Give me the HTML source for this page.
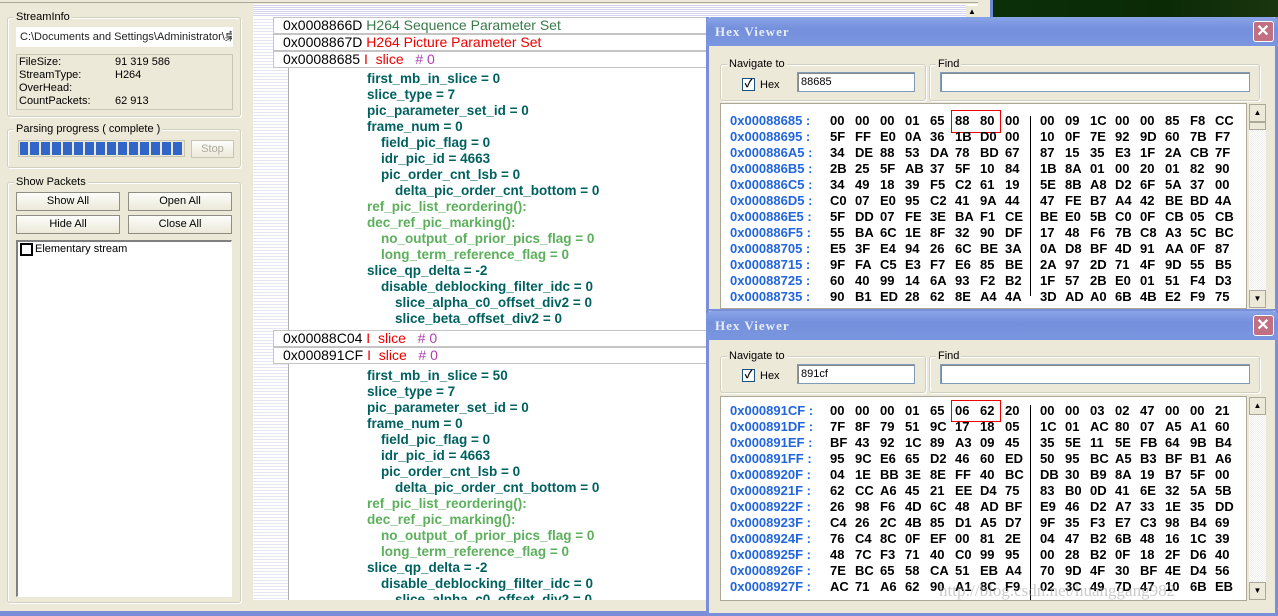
<!DOCTYPE html>
<html><head><meta charset="utf-8">
<style>
*{margin:0;padding:0;box-sizing:border-box}
body{width:1278px;height:616px;overflow:hidden;background:#ECE9D8;position:relative;font-family:"Liberation Sans","Noto Sans CJK SC",sans-serif}
.a{position:absolute}
.grp{position:absolute;border:1px solid #D0D0BF;box-shadow:inset 1px 1px 0 #fff,1px 1px 0 #fff;border-radius:3px}
.gl{position:absolute;top:-8px;left:6px;background:#ECE9D8;padding:0 2px;font-size:11px;color:#000;line-height:14px}
.btn{position:absolute;height:19px;border:1px solid #8f8e84;background:linear-gradient(#fdfdfb,#ECE9D8);font-size:11px;text-align:center;line-height:17px;color:#000}
.sm{font-size:11px;line-height:13px;color:#000}
.tr{position:absolute;font-weight:bold;font-size:13.5px;color:#006060;line-height:16px;white-space:nowrap}
.g{color:#5cb05c}
.hd{position:absolute;left:273px;width:460px;height:17px;border:1px solid #c4c4c4;background:#fff;font-size:14px;line-height:15px;white-space:nowrap;padding-left:9px}
.hd b{font-weight:normal;color:#000}
.dlg{position:absolute;left:706px;width:572px;background:#ECE9D8;border:3px solid #7b8fd8;border-top:none}
.tt{position:absolute;left:-3px;right:-3px;top:0;height:29px;background:linear-gradient(#8aa4e8,#7490dc 40%,#7a96e0);border-radius:6px 6px 0 0;color:#e6ecf8;font-family:"Liberation Serif",serif;font-weight:bold;font-size:13px;letter-spacing:1px;line-height:29px;padding-left:9px}
.cl{position:absolute;right:4px;top:4px;width:21px;height:21px;background:#c07080;border:1px solid #fff;border-radius:3px;color:#fff;font-size:16px;line-height:19px;text-align:center;font-family:"Liberation Sans",sans-serif}
.inp{position:absolute;background:#fff;border:1px solid #7f9db9;box-shadow:inset 1px 1px 0 #888;font-size:11px;line-height:18px;padding-left:3px;color:#000}
.hx{position:absolute;background:#fff;border:1px solid #aca899;overflow:hidden}
.row{position:absolute;left:9px;height:16px;font-weight:bold;font-size:13px;line-height:16px;white-space:nowrap}
.row s{text-decoration:none;color:#2266dd;display:inline-block;width:100px}
.row i{font-style:normal;display:inline-block;width:25px;color:#000}
.row u{text-decoration:none;display:inline-block;width:10px}
.sep{position:absolute;left:309px;width:1px;background:#000}
.sb{position:absolute;width:17px;background:repeating-conic-gradient(#eee 0 25%,#fff 0 50%) 0 0/2px 2px}
.sbb{position:absolute;left:0;width:17px;height:18px;border:1px solid #aca899;background:#ECE9D8;font-size:8px;text-align:center;line-height:16px}
.chk{position:absolute;width:13px;height:13px;border:1px solid #1c5180;background:#fff;font-size:11px;line-height:11px;text-align:center;font-weight:bold}
</style></head><body>

<!-- top line -->
<div class="a" style="left:0;top:0;width:990px;height:3px;border-bottom:1px solid #aca899"></div>
<!-- desktop -->
<div class="a" style="left:990px;top:0;width:3px;height:18px;background:#6f86d4"></div>
<div class="a" style="left:993px;top:0;width:285px;height:18px;background:linear-gradient(90deg,#0b3008,#0a2a06 60%,#1a3510)"></div>
<div class="a" style="left:0;top:611px;width:710px;height:5px;background:#7b8fd8"></div>

<!-- LEFT PANEL -->
<div class="grp" style="left:7px;top:17px;width:234px;height:100px"><div class="gl">StreamInfo</div></div>
<div class="inp" style="left:16px;top:27px;width:217px;height:20px;white-space:nowrap;overflow:hidden;border-color:#fff;box-shadow:none;background:#fff;color:#222">C:\Documents and Settings\Administrator\桌</div>
<div class="a" style="left:16px;top:54px;width:217px;height:56px;border:1px solid #c8c5b0;background:#ECE9D8"></div>
<div class="a sm" style="left:19px;top:56px">FileSize:<br>StreamType:<br>OverHead:<br>CountPackets:</div>
<div class="a sm" style="left:115px;top:56px">91 319 586<br>H264<br><br>62 913</div>

<div class="grp" style="left:7px;top:129px;width:234px;height:39px"><div class="gl">Parsing progress ( complete )</div></div>
<div class="a" style="left:18px;top:140px;width:167px;height:17px;border:1px solid #c8c5b0;background:repeating-linear-gradient(90deg,#3166c8 0 9px,#ECE9D8 9px 11px);background-clip:content-box;padding:1px"></div>
<div class="btn" style="left:191px;top:140px;width:43px;height:18px;color:#aca899;border-color:#c8c5b0">Stop</div>

<div class="grp" style="left:7px;top:182px;width:234px;height:421px"><div class="gl">Show Packets</div></div>
<div class="btn" style="left:16px;top:192px;width:104px">Show All</div>
<div class="btn" style="left:128px;top:192px;width:104px">Open All</div>
<div class="btn" style="left:16px;top:215px;width:104px">Hide All</div>
<div class="btn" style="left:128px;top:215px;width:104px">Close All</div>
<div class="a" style="left:16px;top:240px;width:216px;height:357px;background:#fff;border:1px solid #fff;border-left:2px solid #808080;border-top:2px solid #808080"></div>
<div class="a" style="left:20px;top:243px;width:13px;height:13px;border:2px solid #000"></div>
<div class="a sm" style="left:35px;top:243px">Elementary stream</div>

<!-- CENTER LIST -->
<div class="a" style="left:253px;top:4px;width:737px;height:596px;background:#fff"></div>
<div class="a" style="left:253px;top:4px;width:713px;height:13px;background:repeating-linear-gradient(#fff 0 1px,#d4d4f0 1px 2px)"></div>
<div class="a" style="left:253px;top:17px;width:35px;height:583px;background:repeating-linear-gradient(#fff 0 2px,#e6e6f4 2px 3px)"></div>
<div class="a" style="left:288px;top:17px;width:1px;height:583px;background:#b0b0b0"></div>
<div class="a" style="left:966px;top:6px;width:12px;height:12px;background:#ECE9D8;font-size:8px;text-align:center;line-height:12px">▲</div>
<div class="a" style="left:978px;top:0;width:12px;height:18px;background:#ECE9D8"></div>

<div class="hd" style="top:17px"><b>0x0008866D</b> <span style="color:#3a7a4a">H264 Sequence Parameter Set</span></div>
<div class="hd" style="top:34px"><b>0x0008867D</b> <span style="color:#e00">H264 Picture Parameter Set</span></div>
<div class="hd" style="top:51px"><b>0x00088685</b> <span style="color:#e00">I &nbsp;slice</span> &nbsp; <span style="color:#b040b0">#&nbsp;0</span></div>

<div class="tr" style="left:367px;top:71px">first_mb_in_slice = 0</div>
<div class="tr" style="left:367px;top:87px">slice_type = 7</div>
<div class="tr" style="left:367px;top:103px">pic_parameter_set_id = 0</div>
<div class="tr" style="left:367px;top:119px">frame_num = 0</div>
<div class="tr" style="left:381px;top:135px">field_pic_flag = 0</div>
<div class="tr" style="left:381px;top:151px">idr_pic_id = 4663</div>
<div class="tr" style="left:381px;top:167px">pic_order_cnt_lsb = 0</div>
<div class="tr" style="left:395px;top:183px">delta_pic_order_cnt_bottom = 0</div>
<div class="tr g" style="left:367px;top:199px">ref_pic_list_reordering():</div>
<div class="tr g" style="left:367px;top:215px">dec_ref_pic_marking():</div>
<div class="tr g" style="left:381px;top:231px">no_output_of_prior_pics_flag = 0</div>
<div class="tr g" style="left:381px;top:247px">long_term_reference_flag = 0</div>
<div class="tr" style="left:367px;top:263px">slice_qp_delta = -2</div>
<div class="tr" style="left:381px;top:279px">disable_deblocking_filter_idc = 0</div>
<div class="tr" style="left:395px;top:295px">slice_alpha_c0_offset_div2 = 0</div>
<div class="tr" style="left:395px;top:311px">slice_beta_offset_div2 = 0</div>

<div class="hd" style="top:330px"><b>0x00088C04</b> <span style="color:#e00">I &nbsp;slice</span> &nbsp; <span style="color:#b040b0">#&nbsp;0</span></div>
<div class="hd" style="top:347px"><b>0x000891CF</b> <span style="color:#e00">I &nbsp;slice</span> &nbsp; <span style="color:#b040b0">#&nbsp;0</span></div>

<div class="tr" style="left:367px;top:368px">first_mb_in_slice = 50</div>
<div class="tr" style="left:367px;top:384px">slice_type = 7</div>
<div class="tr" style="left:367px;top:400px">pic_parameter_set_id = 0</div>
<div class="tr" style="left:367px;top:416px">frame_num = 0</div>
<div class="tr" style="left:381px;top:432px">field_pic_flag = 0</div>
<div class="tr" style="left:381px;top:448px">idr_pic_id = 4663</div>
<div class="tr" style="left:381px;top:464px">pic_order_cnt_lsb = 0</div>
<div class="tr" style="left:395px;top:480px">delta_pic_order_cnt_bottom = 0</div>
<div class="tr g" style="left:367px;top:496px">ref_pic_list_reordering():</div>
<div class="tr g" style="left:367px;top:512px">dec_ref_pic_marking():</div>
<div class="tr g" style="left:381px;top:528px">no_output_of_prior_pics_flag = 0</div>
<div class="tr g" style="left:381px;top:544px">long_term_reference_flag = 0</div>
<div class="tr" style="left:367px;top:560px">slice_qp_delta = -2</div>
<div class="tr" style="left:381px;top:576px">disable_deblocking_filter_idc = 0</div>
<div class="a" style="left:289px;top:592px;width:420px;height:8px;overflow:hidden"><div class="tr" style="left:106px;top:0">slice_alpha_c0_offset_div2 = 0</div></div>
<div class="a" style="left:253px;top:600px;width:457px;height:11px;background:#ECE9D8"></div>

<!-- HEX VIEWER 1 -->
<div class="dlg" style="top:17px;height:295px">
 <div class="tt">Hex Viewer<div class="cl">✕</div></div>
 <div class="grp" style="left:11px;top:47px;width:206px;height:37px"><div class="gl">Navigate to</div></div>
 <div class="chk" style="left:33px;top:61px">✓</div>
 <div class="a sm" style="left:51px;top:62px">Hex</div>
 <div class="inp" style="left:88px;top:55px;width:118px;height:20px">88685</div>
 <div class="grp" style="left:220px;top:47px;width:331px;height:37px"><div class="gl">Find</div></div>
 <div class="inp" style="left:231px;top:55px;width:310px;height:20px"></div>
 <div class="hx" style="left:11px;top:86px;width:527px;height:206px">
  <div class="sep" style="top:12px;height:180px"></div>
  <div class="a" style="left:230px;top:6px;width:50px;height:23px;border:1px solid #e00"></div>
  <div class="row" style="top:9px"><s>0x00088685 :</s><i>00</i><i>00</i><i>00</i><i>01</i><i>65</i><i>88</i><i>80</i><i>00</i><u></u><i>00</i><i>09</i><i>1C</i><i>00</i><i>00</i><i>85</i><i>F8</i><i>CC</i></div>
  <div class="row" style="top:25px"><s>0x00088695 :</s><i>5F</i><i>FF</i><i>E0</i><i>0A</i><i>36</i><i>1B</i><i>D0</i><i>00</i><u></u><i>10</i><i>0F</i><i>7E</i><i>92</i><i>9D</i><i>60</i><i>7B</i><i>F7</i></div>
  <div class="row" style="top:41px"><s>0x000886A5 :</s><i>34</i><i>DE</i><i>88</i><i>53</i><i>DA</i><i>78</i><i>BD</i><i>67</i><u></u><i>87</i><i>15</i><i>35</i><i>E3</i><i>1F</i><i>2A</i><i>CB</i><i>7F</i></div>
  <div class="row" style="top:57px"><s>0x000886B5 :</s><i>2B</i><i>25</i><i>5F</i><i>AB</i><i>37</i><i>5F</i><i>10</i><i>84</i><u></u><i>1B</i><i>8A</i><i>01</i><i>00</i><i>20</i><i>01</i><i>82</i><i>90</i></div>
  <div class="row" style="top:73px"><s>0x000886C5 :</s><i>34</i><i>49</i><i>18</i><i>39</i><i>F5</i><i>C2</i><i>61</i><i>19</i><u></u><i>5E</i><i>8B</i><i>A8</i><i>D2</i><i>6F</i><i>5A</i><i>37</i><i>00</i></div>
  <div class="row" style="top:89px"><s>0x000886D5 :</s><i>C0</i><i>07</i><i>E0</i><i>95</i><i>C2</i><i>41</i><i>9A</i><i>44</i><u></u><i>47</i><i>FE</i><i>B7</i><i>A4</i><i>42</i><i>BE</i><i>BD</i><i>4A</i></div>
  <div class="row" style="top:105px"><s>0x000886E5 :</s><i>5F</i><i>DD</i><i>07</i><i>FE</i><i>3E</i><i>BA</i><i>F1</i><i>CE</i><u></u><i>BE</i><i>E0</i><i>5B</i><i>C0</i><i>0F</i><i>CB</i><i>05</i><i>CB</i></div>
  <div class="row" style="top:121px"><s>0x000886F5 :</s><i>55</i><i>BA</i><i>6C</i><i>1E</i><i>8F</i><i>32</i><i>90</i><i>DF</i><u></u><i>17</i><i>48</i><i>F6</i><i>7B</i><i>C8</i><i>A3</i><i>5C</i><i>BC</i></div>
  <div class="row" style="top:137px"><s>0x00088705 :</s><i>E5</i><i>3F</i><i>E4</i><i>94</i><i>26</i><i>6C</i><i>BE</i><i>3A</i><u></u><i>0A</i><i>D8</i><i>BF</i><i>4D</i><i>91</i><i>AA</i><i>0F</i><i>87</i></div>
  <div class="row" style="top:153px"><s>0x00088715 :</s><i>9F</i><i>FA</i><i>C5</i><i>E3</i><i>F7</i><i>E6</i><i>85</i><i>BE</i><u></u><i>2A</i><i>97</i><i>2D</i><i>71</i><i>4F</i><i>9D</i><i>55</i><i>B5</i></div>
  <div class="row" style="top:169px"><s>0x00088725 :</s><i>60</i><i>40</i><i>99</i><i>14</i><i>6A</i><i>93</i><i>F2</i><i>B2</i><u></u><i>1F</i><i>57</i><i>2B</i><i>E0</i><i>01</i><i>51</i><i>F4</i><i>D3</i></div>
  <div class="row" style="top:185px"><s>0x00088735 :</s><i>90</i><i>B1</i><i>ED</i><i>28</i><i>62</i><i>8E</i><i>A4</i><i>4A</i><u></u><i>3D</i><i>AD</i><i>A0</i><i>6B</i><i>4B</i><i>E2</i><i>F9</i><i>75</i></div>
 </div>
 <div class="sb" style="left:540px;top:87px;height:204px">
  <div class="sbb" style="top:0">▲</div><div class="sbb" style="top:18px;height:8px"></div><div class="sbb" style="top:186px">▼</div>
 </div>
</div>

<!-- HEX VIEWER 2 -->
<div class="dlg" style="top:311px;height:305px;border-bottom:3px solid #7b8fd8">
 <div class="tt">Hex Viewer<div class="cl">✕</div></div>
 <div class="grp" style="left:11px;top:45px;width:206px;height:37px"><div class="gl">Navigate to</div></div>
 <div class="chk" style="left:33px;top:58px">✓</div>
 <div class="a sm" style="left:51px;top:59px">Hex</div>
 <div class="inp" style="left:88px;top:53px;width:118px;height:20px">891cf</div>
 <div class="grp" style="left:220px;top:45px;width:331px;height:37px"><div class="gl">Find</div></div>
 <div class="inp" style="left:231px;top:53px;width:310px;height:20px"></div>
 <div class="hx" style="left:11px;top:85px;width:527px;height:205px">
  <div class="sep" style="top:8px;height:195px"></div>
  <div class="a" style="left:230px;top:3px;width:50px;height:22px;border:1px solid #e00"></div>
  <div class="row" style="top:6px"><s>0x000891CF :</s><i>00</i><i>00</i><i>00</i><i>01</i><i>65</i><i>06</i><i>62</i><i>20</i><u></u><i>00</i><i>00</i><i>03</i><i>02</i><i>47</i><i>00</i><i>00</i><i>21</i></div>
  <div class="row" style="top:22px"><s>0x000891DF :</s><i>7F</i><i>8F</i><i>79</i><i>51</i><i>9C</i><i>17</i><i>18</i><i>05</i><u></u><i>1C</i><i>01</i><i>AC</i><i>80</i><i>07</i><i>A5</i><i>A1</i><i>60</i></div>
  <div class="row" style="top:38px"><s>0x000891EF :</s><i>BF</i><i>43</i><i>92</i><i>1C</i><i>89</i><i>A3</i><i>09</i><i>45</i><u></u><i>35</i><i>5E</i><i>11</i><i>5E</i><i>FB</i><i>64</i><i>9B</i><i>B4</i></div>
  <div class="row" style="top:54px"><s>0x000891FF :</s><i>95</i><i>9C</i><i>E6</i><i>65</i><i>D2</i><i>46</i><i>60</i><i>ED</i><u></u><i>50</i><i>95</i><i>BC</i><i>A5</i><i>B3</i><i>BF</i><i>B1</i><i>A6</i></div>
  <div class="row" style="top:70px"><s>0x0008920F :</s><i>04</i><i>1E</i><i>BB</i><i>3E</i><i>8E</i><i>FF</i><i>40</i><i>BC</i><u></u><i>DB</i><i>30</i><i>B9</i><i>8A</i><i>19</i><i>B7</i><i>5F</i><i>00</i></div>
  <div class="row" style="top:86px"><s>0x0008921F :</s><i>62</i><i>CC</i><i>A6</i><i>45</i><i>21</i><i>EE</i><i>D4</i><i>75</i><u></u><i>83</i><i>B0</i><i>0D</i><i>41</i><i>6E</i><i>32</i><i>5A</i><i>5B</i></div>
  <div class="row" style="top:102px"><s>0x0008922F :</s><i>26</i><i>98</i><i>F6</i><i>4D</i><i>6C</i><i>48</i><i>AD</i><i>BF</i><u></u><i>E9</i><i>46</i><i>D2</i><i>A7</i><i>33</i><i>1E</i><i>35</i><i>DD</i></div>
  <div class="row" style="top:118px"><s>0x0008923F :</s><i>C4</i><i>26</i><i>2C</i><i>4B</i><i>85</i><i>D1</i><i>A5</i><i>D7</i><u></u><i>9F</i><i>35</i><i>F3</i><i>E7</i><i>C3</i><i>98</i><i>B4</i><i>69</i></div>
  <div class="row" style="top:134px"><s>0x0008924F :</s><i>76</i><i>C4</i><i>8C</i><i>0F</i><i>EF</i><i>00</i><i>81</i><i>2E</i><u></u><i>04</i><i>47</i><i>B2</i><i>6B</i><i>48</i><i>16</i><i>1C</i><i>39</i></div>
  <div class="row" style="top:150px"><s>0x0008925F :</s><i>48</i><i>7C</i><i>F3</i><i>71</i><i>40</i><i>C0</i><i>99</i><i>95</i><u></u><i>00</i><i>28</i><i>B2</i><i>0F</i><i>18</i><i>2F</i><i>D6</i><i>40</i></div>
  <div class="row" style="top:166px"><s>0x0008926F :</s><i>7E</i><i>BC</i><i>65</i><i>58</i><i>CA</i><i>51</i><i>EB</i><i>A4</i><u></u><i>70</i><i>9D</i><i>4F</i><i>30</i><i>BF</i><i>4E</i><i>D4</i><i>56</i></div>
  <div class="row" style="top:182px"><s>0x0008927F :</s><i>AC</i><i>71</i><i>A6</i><i>62</i><i>90</i><i>A1</i><i>8C</i><i>F9</i><u></u><i>02</i><i>3C</i><i>49</i><i>7D</i><i>47</i><i>10</i><i>6B</i><i>EB</i></div>
 </div>
 <div class="sb" style="left:540px;top:86px;height:203px">
  <div class="sbb" style="top:0">▲</div><div class="sbb" style="top:185px">▼</div>
 </div>
 <div class="a" style="left:230px;top:270px;font-family:'Liberation Serif',serif;font-size:17px;color:rgba(160,160,160,0.55);white-space:nowrap">http://blog.csdn.net/huanggang982</div>
</div>

</body></html>
